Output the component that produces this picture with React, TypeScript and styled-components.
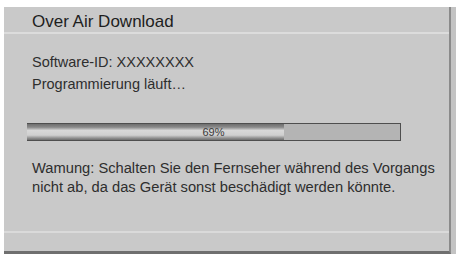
import React from "react";
import styled, { createGlobalStyle } from "styled-components";

const GlobalStyle = createGlobalStyle`
  html, body {
    margin: 0;
    padding: 0;
    background: #ffffff;
  }
  body {
    width: 456px;
    height: 254px;
    overflow: hidden;
    font-family: "Liberation Sans", Arial, sans-serif;
  }
`;

const progress = 69;

const App: React.FC = () => {
  return (
    <>
      <GlobalStyle />
      <Screen>
        <Panel>
          <Header>
            <Title>Over Air Download</Title>
          </Header>
          <Body>
            <InfoLine>Software-ID: XXXXXXXX</InfoLine>
            <InfoLine>Programmierung läuft…</InfoLine>
            <Track>
              <Fill style={{ width: `${progress}%` }} />
              <Label>{progress}%</Label>
            </Track>
            <Warning>
              Wamung: Schalten Sie den Fernseher während des Vorgangs nicht
              ab, da das Gerät sonst beschädigt werden könnte.
            </Warning>
          </Body>
          <Footer />
        </Panel>
      </Screen>
    </>
  );
};

const Screen = styled.div`
  width: 456px;
  height: 254px;
  padding: 7px 5px 0 4px;
  box-sizing: border-box;
  display: flex;
`;

const Panel = styled.div`
  flex: 1;
  display: flex;
  flex-direction: column;
  background: #c9c9c9;
  border-right: 2px solid #8a8a8a;
  border-bottom: 3px solid #6f6f6f;
  box-shadow: 5px 0 0 #c3c3c3;
`;

const Header = styled.div`
  height: 27px;
  box-sizing: border-box;
  display: flex;
  align-items: center;
  padding-left: 28px;
  border-bottom: 2px solid #dcdcdc;
`;

const Title = styled.div`
  font-size: 17px;
  color: #1e1e1e;
  padding-top: 4px;
`;

const Body = styled.div`
  flex: 1;
  padding: 17px 0 0 28px;
  display: flex;
  flex-direction: column;
`;

const InfoLine = styled.div`
  font-size: 14.5px;
  color: #2e2e2e;
  line-height: 22px;
`;

const Track = styled.div`
  position: relative;
  width: 374px;
  height: 18px;
  margin: 28px 0 0 -5px;
  box-sizing: border-box;
  background: #b4b4b4;
  border: 1.5px solid #4e4e4e;
  border-left: none;
`;

const Fill = styled.div`
  height: 100%;
  background: linear-gradient(
    to bottom,
    #6e6e6e 0%,
    #8a8a8a 20%,
    #d8d8d8 40%,
    #cfcfcf 70%,
    #8a8a8a 90%,
    #6e6e6e 100%
  );
`;

const Label = styled.div`
  position: absolute;
  inset: 0;
  display: flex;
  align-items: center;
  justify-content: center;
  font-size: 11px;
  color: #3a3a3a;
`;

const Warning = styled.div`
  margin-top: 18px;
  width: 416px;
  font-size: 14.7px;
  line-height: 19px;
  color: #2e2e2e;
`;

const Footer = styled.div`
  height: 18px;
  border-top: 2px solid #dadada;
`;

export default App;
